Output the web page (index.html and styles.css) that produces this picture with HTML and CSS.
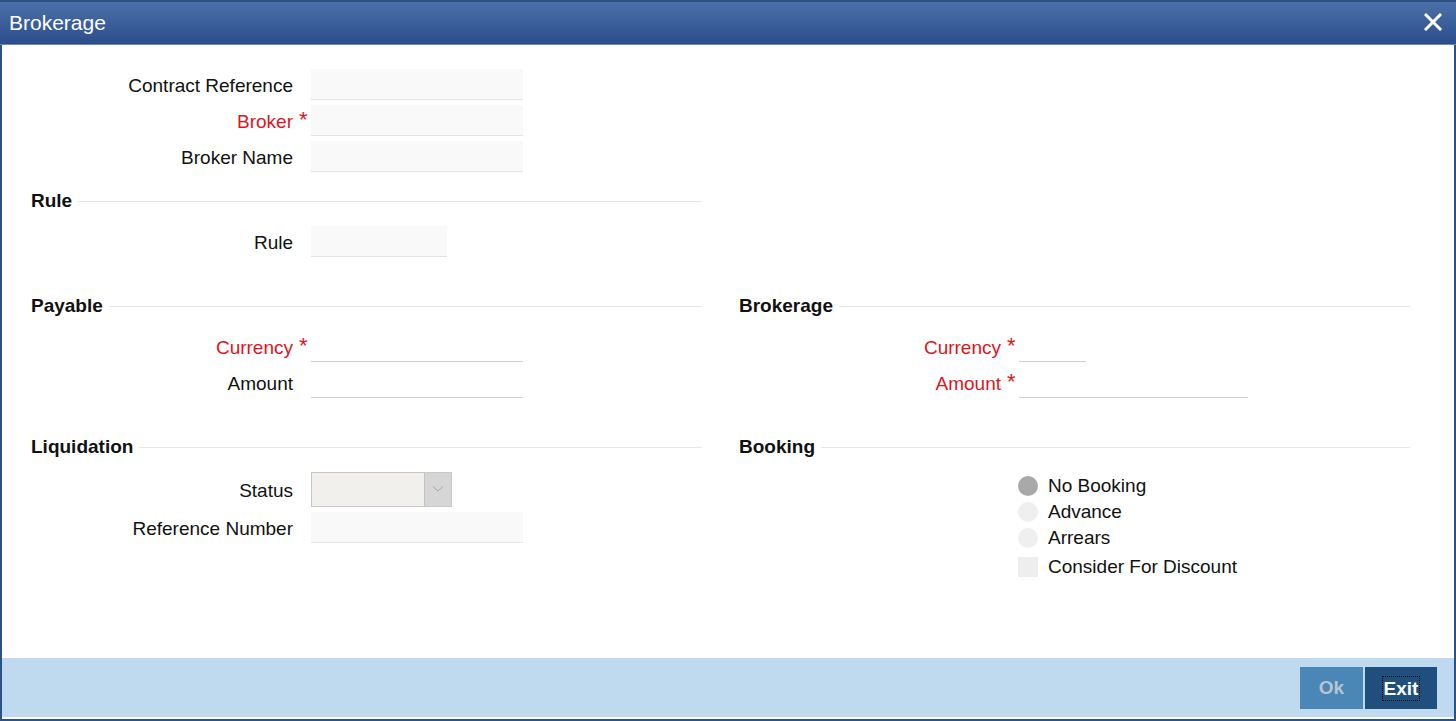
FILE: index.html
```html
<!DOCTYPE html>
<html>
    <head>
        <meta charset="utf-8">
        <title>Brokerage</title>
        <link rel="stylesheet" href="styles.css">
    </head>
    <body>
        <div class="window">
            <div class="titlebar">
                <div class="title">Brokerage</div>
                <div class="close">
                    <svg width="18" height="18" viewBox="0 0 18 18">
                        <path d="M2 2 L16 16 M16 2 L2 16" stroke="#fff" stroke-width="3" stroke-linecap="square"/>
                    </svg>
                </div>
            </div>

            <div class="content">
                <!-- contract block -->
                <div class="col">
                    <div class="field">
                        <div class="label">Contract Reference</div>
                        <div class="star"></div>
                        <div class="input w212"></div>
                    </div>
                    <div class="field">
                        <div class="label req">Broker</div>
                        <div class="star">*</div>
                        <div class="input w212"></div>
                    </div>
                    <div class="field">
                        <div class="label">Broker Name</div>
                        <div class="star"></div>
                        <div class="input w212"></div>
                    </div>
                </div>

                <div class="col">
                    <div class="heading first"><span>Rule</span><div class="rule"></div></div>
                    <div class="field">
                        <div class="label">Rule</div>
                        <div class="star"></div>
                        <div class="input w136"></div>
                    </div>
                </div>

                <div class="pair">
                    <div class="col">
                        <div class="heading"><span>Payable</span><div class="rule"></div></div>
                        <div class="field">
                            <div class="label req">Currency</div>
                            <div class="star">*</div>
                            <div class="line w212"></div>
                        </div>
                        <div class="field">
                            <div class="label">Amount</div>
                            <div class="star"></div>
                            <div class="line w212"></div>
                        </div>
                    </div>
                    <div class="col">
                        <div class="heading"><span>Brokerage</span><div class="rule"></div></div>
                        <div class="field">
                            <div class="label req">Currency</div>
                            <div class="star">*</div>
                            <div class="line w67"></div>
                        </div>
                        <div class="field">
                            <div class="label req">Amount</div>
                            <div class="star">*</div>
                            <div class="line w229"></div>
                        </div>
                    </div>
                </div>

                <div class="pair">
                    <div class="col">
                        <div class="heading"><span>Liquidation</span><div class="rule"></div></div>
                        <div class="field tall">
                            <div class="label">Status</div>
                            <div class="star"></div>
                            <div class="select">
                                <div class="sel-value"></div>
                                <div class="sel-arrow">
                                    <svg width="12" height="8" viewBox="0 0 12 8">
                                        <path d="M1 1.5 L6 6 L11 1.5" fill="none" stroke="#a8a8a8" stroke-width="1"/>
                                    </svg>
                                </div>
                            </div>
                        </div>
                        <div class="field">
                            <div class="label">Reference Number</div>
                            <div class="star"></div>
                            <div class="input w212"></div>
                        </div>
                    </div>
                    <div class="col">
                        <div class="heading"><span>Booking</span><div class="rule"></div></div>
                        <div class="options">
                            <div class="option"><div class="radio on"></div>No Booking</div>
                            <div class="option"><div class="radio"></div>Advance</div>
                            <div class="option"><div class="radio"></div>Arrears</div>
                            <div class="option check"><div class="box"></div>Consider For Discount</div>
                        </div>
                    </div>
                </div>
            </div>

            <div class="footer">
                <div class="btn ok">Ok</div>
                <div class="btn exit"><span>Exit</span></div>
            </div>
        </div>
    </body>
</html>
```

FILE: styles.css
```css
*{
    box-sizing: border-box;
    margin: 0px;
    padding: 0px;
}
body
{
    font-family: "Liberation Sans", Arial, sans-serif;
    background: #fff;
}
.window
{
    height: 721px;
    display: flex;
    flex-direction: column;
    border-left: 2px solid #2d5286;
    border-right: 2px solid #2d5286;
    border-bottom: 2px solid #2d5286;
}
.titlebar
{
    height: 45px;
    margin: 0 -2px;
    display: flex;
    align-items: center;
    justify-content: space-between;
    padding: 0 14px 0 9px;
    border-top: 2px solid #2f5082;
    border-bottom: 1px solid #6a86b0;
    background: linear-gradient(180deg, #4b70a9, #2b4e8b);
    color: #fff;
}
.title
{
    font-size: 21px;
    padding-bottom: 1px;
}
.close
{
    display: flex;
    padding-bottom: 2px;
}

.content
{
    flex: 1;
    padding: 21px 0 0 29px;
}
.col
{
    width: 671px;
}
.pair
{
    display: grid;
    grid-template-columns: 671px 672px;
    column-gap: 37px;
}

.field
{
    display: grid;
    grid-template-columns: 262px 18px auto;
    align-items: center;
    height: 36px;
    font-size: 19px;
    color: #111;
}
.field.tall
{
    height: 40px;
}
.label
{
    text-align: right;
    padding-top: 3px;
}
.req
{
    color: #e0141e;
}
.star
{
    color: #e0141e;
    font-size: 22px;
    padding-left: 6px;
    align-self: start;
    padding-top: 5px;
}
.input
{
    height: 31px;
    background: #f9f9f9;
    border-bottom: 1px solid #e4e4e4;
}
.line
{
    height: 31px;
    border-bottom: 1px solid #cfcfcf;
    margin-top: 1px;
}
.w212 { width: 212px; }
.w136 { width: 136px; }
.w67 { width: 67px; }
.w229 { width: 229px; }

.heading
{
    display: flex;
    align-items: center;
    height: 20px;
    margin-top: 37px;
    margin-bottom: 12px;
    font-size: 19px;
    font-weight: bold;
    color: #111;
}
.heading.first
{
    margin-top: 17px;
}
.heading .rule
{
    flex: 1;
    height: 1px;
    margin-left: 6px;
    background: #e6e6e6;
}

.select
{
    width: 141px;
    height: 35px;
    display: flex;
    border: 1px solid #c9c9c9;
    background: #f1f0ec;
}
.sel-value
{
    flex: 1;
}
.sel-arrow
{
    width: 27px;
    background: #d6d6d6;
    border-left: 1px solid #c4c4c4;
    display: flex;
    align-items: center;
    justify-content: center;
}

.options
{
    padding-left: 279px;
    padding-top: 4px;
    font-size: 19px;
    color: #111;
}
.option
{
    display: flex;
    align-items: center;
    height: 26px;
}
.option.check
{
    margin-top: 3px;
}
.radio
{
    width: 20px;
    height: 20px;
    border-radius: 50%;
    background: #efefef;
    margin-right: 10px;
}
.radio.on
{
    background: #a9a9a9;
}
.box
{
    width: 20px;
    height: 20px;
    background: #eeeeee;
    margin-right: 10px;
}

.footer
{
    height: 61px;
    display: flex;
    justify-content: flex-end;
    align-items: flex-start;
    gap: 2px;
    padding: 9px 17px 0 0;
    background: #bfd9ee;
    border-bottom: 2px solid #fff;
}
.btn
{
    height: 42px;
    display: flex;
    align-items: center;
    justify-content: center;
    font-size: 19px;
    font-weight: bold;
}
.ok
{
    width: 63px;
    background: #4a87b6;
    color: #b9c5d0;
}
.exit
{
    width: 72px;
    background: #1f4f7d;
    color: #fff;
}
.exit span
{
    border: 1px dotted #000;
    padding: 1px 1px 0 1px;
    line-height: 22px;
}
```
